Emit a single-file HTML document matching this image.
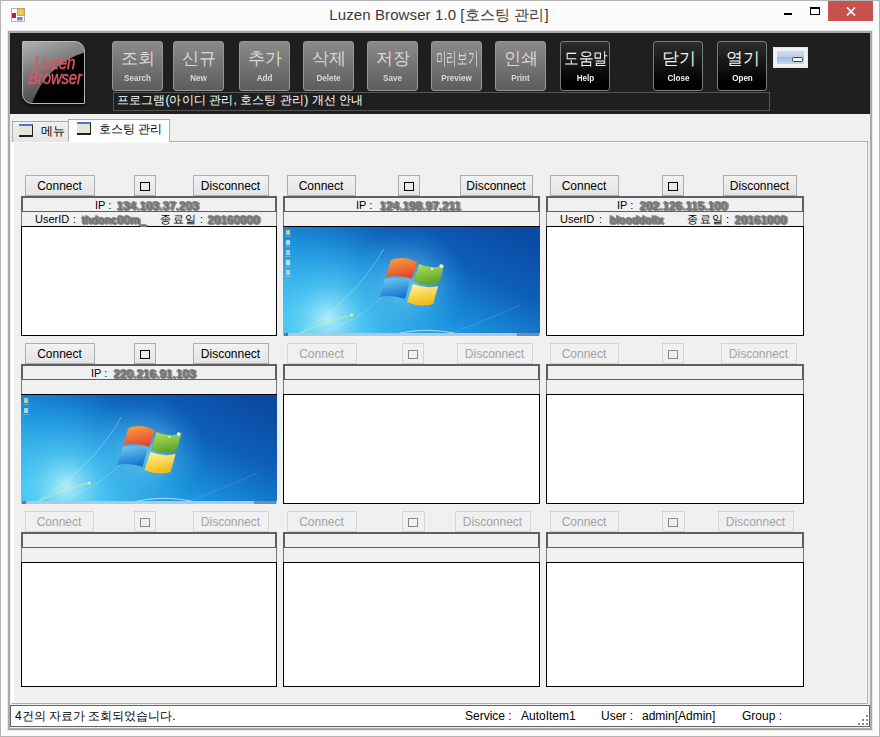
<!DOCTYPE html>
<html><head><meta charset="utf-8">
<style>
*{box-sizing:border-box;margin:0;padding:0}
html,body{width:880px;height:737px;overflow:hidden;background:#fbfbfb;font-family:"Liberation Sans", sans-serif}
.abs,div,span,svg{position:absolute}
#win{left:0;top:0;width:880px;height:737px;background:#fbfbfb}
#frame{left:0;top:0;width:880px;height:737px;border:1px solid #b4b4b4}
#title{left:-1px;top:6px;width:880px;text-align:center;font-size:15px;line-height:18px;color:#3a3a3a;letter-spacing:0.1px;padding-left:0px}
#client{left:7px;top:30px;width:866px;height:701px;border:1px solid #e6e6e6}
#client2{left:8px;top:31px;width:864px;height:699px;border:2px solid #a9a9a9;background:#f0f0f0}
#dark{left:10px;top:33px;width:860px;height:81px;background:#1f1f1f}
.tb{top:41px;width:51px;height:50px;border:1px solid #959595;border-radius:3px;background:linear-gradient(#8a8a8a,#5d5d5d);color:#d8d8d8;text-align:center}
.tb.dark{width:50px;border-color:#7c7c7c;background:linear-gradient(#2e2e2e,#000 85%)}
.tb .k{left:0;width:49px;top:6px;font-size:17px;line-height:21px;white-space:nowrap}
.tb .k.small{font-size:17px;letter-spacing:-1px}
.tb .k.sq4{transform:scaleX(0.62);left:-14px;width:78px}
.tb .k.sq3{transform:scaleX(0.86);left:-5px;width:60px}
.tb .e{left:0;width:49px;top:30px;font-size:9.4px;line-height:11px;font-weight:bold;transform:scaleX(0.86)}
.tb.dark .k,.tb.dark .e{color:#f2f2f2}
#tbox{left:113px;top:92px;width:657px;height:19px;border:1px solid #555;background:#1f1f1f;color:#fff;font-size:12px;line-height:15px;padding-left:3px;white-space:nowrap;letter-spacing:0.1px}
#logo{left:22px;top:41px;width:63px;height:63px;border:1px solid #b8b8b8;border-radius:1px 10px 1px 10px;overflow:hidden;background:linear-gradient(160deg,#b0b0b0,#606060 60%,#333);box-shadow:0 2px 3px rgba(0,0,0,.6)}
#logo .gl{left:5px;top:7px;width:160px;height:160px;border-radius:50%;background:#000}
#logo .lt{left:0;width:62px;font-style:italic;color:#dc5660;font-size:15px;line-height:16px;text-align:center;font-family:"Liberation Sans",sans-serif;-webkit-text-stroke:0.4px #dc5660;transform:scaleY(1.22)}
#smallbtn{left:773px;top:47px;width:35px;height:21px;border:1px solid #e4e8ec;background:#f0f3f6}
#smallbtn b{position:absolute;left:3px;top:3px;width:27px;height:13px;background:linear-gradient(#d2deee 0%,#bccfe8 45%,#a6bcd8 50%,#b4c8e4 75%,#c6d8f0 100%)}
#smallbtn i{position:absolute;left:18px;top:9px;width:11px;height:5px;border:1px solid #3a4250;background:#f4f4f4;border-radius:1.5px}
.tab{top:121px;height:21px;border:1px solid #acacac;border-bottom:none;background:linear-gradient(#f0f0f0,#e5e5e5);font-size:13px;color:#000}
.tab.act{top:119px;height:23px;background:#fff}
.ticon{width:14px;height:13px;background:#e6e6d8;border-top:2px solid #4a78c8;border-right:1px solid #222;border-bottom:2px solid #222}
#page{left:11px;top:141px;width:857px;height:563px;border:1px solid #acacac;border-left-color:#fff;background:#f0f0f0}
#page2{left:0;top:0;width:855px;height:561px;border:1px solid #fafafa;border-left:2px solid #fff}
.b{height:21px;border:1px solid #adadad;background:linear-gradient(#f2f2f2,#e4e4e4);font-size:12px;line-height:20px;text-indent:-1px;text-align:center;color:#000;white-space:nowrap}
.b.dis{border-color:#d5d5d5;background:#f0f0f0;color:#a3a3a3}
.sq{position:absolute;left:5px;top:6px;width:10px;height:9px;border:1px solid #000}
.dis .sq{border-color:#8a8a8a}
.ip{height:16px;border:2px solid #5f5f5f;border-bottom-width:1px;background:#f0f0f0}
.ip{box-sizing:content-box;height:13px;width:auto}
.uid{height:14px;border-left:1px solid #7a7a7a;border-right:1px solid #7a7a7a;background:#f0f0f0;box-sizing:content-box}
.img{border:1px solid #000;background:#fff;box-sizing:content-box}
.t{font-size:11px;line-height:13px;color:#000;white-space:nowrap}
.bl{height:9px;border-radius:4px;background:#767676;filter:blur(0.6px)}
.blt{height:14px;font-size:11px;line-height:14px;color:#707070;overflow:visible;white-space:nowrap;letter-spacing:0.4px;text-shadow:1px 0 #808080,-1px 0 #808080,0 1px #888,0 -1px #888,1px 1px #8a8a8a,-1px -1px #8a8a8a,2px 0 #909090;filter:blur(0.65px)}
#status{left:10px;top:705px;width:860px;height:22px;border:1px solid #646464;background:#fff;font-size:12px}
.st{top:3px;font-size:12px;line-height:14px;color:#000;white-space:nowrap}
.grip{width:2px;height:2px;background:#8c8c8c}
</style></head><body>
<div id="win">
<div id="frame"></div>
<svg style="left:11px;top:8px" width="14" height="14" viewBox="0 0 14 14">
<rect x="0.5" y="0.5" width="13" height="13" fill="#fff" stroke="#b4b4b4"/>
<rect x="6.5" y="0.8" width="6.7" height="6.7" fill="#f2ca55" stroke="#c49a2a" stroke-width="0.8"/>
<rect x="1" y="5" width="4" height="5" fill="#b8262c"/>
<rect x="6" y="9" width="5.5" height="3.5" fill="#5b8bd9"/>
</svg>
<div id="title">Luzen Browser 1.0 [호스팅 관리]</div>
<div style="left:784px;top:13px;width:8px;height:2px;background:#000"></div>
<div style="left:810px;top:7px;width:10px;height:8px;border:1px solid #000;border-top-width:2px"></div>
<div style="left:828px;top:1px;width:45px;height:20px;background:#c7514f"></div>
<svg style="left:846px;top:7px" width="10" height="9" viewBox="0 0 10 9"><path d="M1 0.5 L9 8.5 M9 0.5 L1 8.5" stroke="#fff" stroke-width="1.7"/></svg>
<div id="client"></div>
<div id="client2"></div>
<div id="dark"></div>
<div id="logo"><div class="gl"></div><div class="lt" style="top:13px;left:1px">Luzen</div><div class="lt" style="top:28px;letter-spacing:-0.2px;left:1px">Browser</div></div>
<div class="tb" style="left:112px"><div class="k">조회</div><div class="e">Search</div></div>
<div class="tb" style="left:173px"><div class="k">신규</div><div class="e">New</div></div>
<div class="tb" style="left:239px"><div class="k">추가</div><div class="e">Add</div></div>
<div class="tb" style="left:303px"><div class="k">삭제</div><div class="e">Delete</div></div>
<div class="tb" style="left:367px"><div class="k">저장</div><div class="e">Save</div></div>
<div class="tb" style="left:431px"><div class="k sq4">미리보기</div><div class="e">Preview</div></div>
<div class="tb" style="left:495px"><div class="k">인쇄</div><div class="e">Print</div></div>
<div class="tb dark" style="left:560px"><div class="k sq3">도움말</div><div class="e">Help</div></div>
<div class="tb dark" style="left:653px"><div class="k">닫기</div><div class="e">Close</div></div>
<div class="tb dark" style="left:717px"><div class="k">열기</div><div class="e">Open</div></div>
<div id="smallbtn"><b></b><i></i></div>
<div id="tbox">프로그램(아이디 관리, 호스팅 관리) 개선 안내</div>
<div id="page"><div id="page2"></div></div>
<div class="tab" style="left:12px;width:57px"><div class="ticon" style="left:6px;top:2px"></div><span style="left:28px;top:1px;font-size:12px">메뉴</span></div>
<div class="tab act" style="left:68px;width:102px"><div class="ticon" style="left:8px;top:2px"></div><span style="left:30px;top:1px;font-size:12px">호스팅 관리</span></div>
<div class="b" style="left:25px;top:175px;width:70px">Connect</div>
<div class="b" style="left:134px;top:175px;width:22px"><i class="sq"></i></div>
<div class="b" style="left:193px;top:175px;width:76px">Disconnect</div>
<div class="ip" style="left:21px;top:196px;width:252px"></div>
<div class="uid" style="left:21px;top:212px;width:254px"></div>
<div class="img" style="left:21px;top:226px;width:254px;height:108px"></div>
<div class="b" style="left:287px;top:175px;width:69px">Connect</div>
<div class="b" style="left:398px;top:175px;width:22px"><i class="sq"></i></div>
<div class="b" style="left:460px;top:175px;width:73px">Disconnect</div>
<div class="ip" style="left:283px;top:196px;width:253px"></div>
<div class="uid" style="left:283px;top:212px;width:255px"></div>
<div class="img" style="left:283px;top:226px;width:255px;height:108px"></div>
<div class="b" style="left:550px;top:175px;width:69px">Connect</div>
<div class="b" style="left:662px;top:175px;width:22px"><i class="sq"></i></div>
<div class="b" style="left:723px;top:175px;width:74px">Disconnect</div>
<div class="ip" style="left:546px;top:196px;width:254px"></div>
<div class="uid" style="left:546px;top:212px;width:256px"></div>
<div class="img" style="left:546px;top:226px;width:256px;height:108px"></div>
<div class="b" style="left:25px;top:343px;width:70px">Connect</div>
<div class="b" style="left:134px;top:343px;width:22px"><i class="sq"></i></div>
<div class="b" style="left:193px;top:343px;width:76px">Disconnect</div>
<div class="ip" style="left:21px;top:364px;width:252px"></div>
<div class="uid" style="left:21px;top:380px;width:254px"></div>
<div class="img" style="left:21px;top:394px;width:254px;height:108px"></div>
<div class="b dis" style="left:287px;top:343px;width:70px">Connect</div>
<div class="b dis" style="left:402px;top:343px;width:22px"><i class="sq"></i></div>
<div class="b dis" style="left:457px;top:343px;width:76px">Disconnect</div>
<div class="ip" style="left:283px;top:364px;width:253px"></div>
<div class="uid" style="left:283px;top:380px;width:255px"></div>
<div class="img" style="left:283px;top:394px;width:255px;height:108px"></div>
<div class="b dis" style="left:550px;top:343px;width:69px">Connect</div>
<div class="b dis" style="left:662px;top:343px;width:22px"><i class="sq"></i></div>
<div class="b dis" style="left:721px;top:343px;width:76px">Disconnect</div>
<div class="ip" style="left:546px;top:364px;width:254px"></div>
<div class="uid" style="left:546px;top:380px;width:256px"></div>
<div class="img" style="left:546px;top:394px;width:256px;height:108px"></div>
<div class="b dis" style="left:25px;top:511px;width:69px">Connect</div>
<div class="b dis" style="left:134px;top:511px;width:22px"><i class="sq"></i></div>
<div class="b dis" style="left:193px;top:511px;width:76px">Disconnect</div>
<div class="ip" style="left:21px;top:532px;width:252px"></div>
<div class="uid" style="left:21px;top:548px;width:254px"></div>
<div class="img" style="left:21px;top:562px;width:254px;height:123px"></div>
<div class="b dis" style="left:287px;top:511px;width:70px">Connect</div>
<div class="b dis" style="left:402px;top:511px;width:23px"><i class="sq"></i></div>
<div class="b dis" style="left:455px;top:511px;width:76px">Disconnect</div>
<div class="ip" style="left:283px;top:532px;width:253px"></div>
<div class="uid" style="left:283px;top:548px;width:255px"></div>
<div class="img" style="left:283px;top:562px;width:255px;height:123px"></div>
<div class="b dis" style="left:550px;top:511px;width:69px">Connect</div>
<div class="b dis" style="left:662px;top:511px;width:23px"><i class="sq"></i></div>
<div class="b dis" style="left:718px;top:511px;width:76px">Disconnect</div>
<div class="ip" style="left:546px;top:532px;width:254px"></div>
<div class="uid" style="left:546px;top:548px;width:256px"></div>
<div class="img" style="left:546px;top:562px;width:256px;height:123px"></div>
<span class="t" style="left:95px;top:199px;">IP :</span><span class="blt" style="left:117px;top:199px;width:90px">134.103.37.203</span>
<span class="t" style="left:35px;top:213px;">UserID</span><span class="t" style="left:73px;top:213px;">:</span><span class="blt" style="left:82px;top:213px;width:68px">thdonc00m_</span><span class="t" style="left:160px;top:213px;letter-spacing:1.5px">종료일</span><span class="t" style="left:200px;top:213px;">:</span><span class="blt" style="left:208px;top:213px;width:57px">20160000</span>
<span class="t" style="left:356px;top:199px;">IP :</span><span class="blt" style="left:380px;top:199px;width:92px">124.198.97.211</span>
<svg class="w7" style="left:283px;top:227px" width="257" height="109" viewBox="0 0 255 109" preserveAspectRatio="none">
<defs>
<linearGradient id="lg283" x1="1" y1="0.15" x2="0.1" y2="0.95">
<stop offset="0" stop-color="#0b4aa4"/>
<stop offset="0.3" stop-color="#0e5fb9"/>
<stop offset="0.62" stop-color="#1a92dc"/>
<stop offset="1" stop-color="#44c4f2"/>
</linearGradient>
<radialGradient id="g1283" cx="45" cy="92" r="95" gradientUnits="userSpaceOnUse">
<stop offset="0" stop-color="#b8f0fb" stop-opacity="0.95"/>
<stop offset="0.35" stop-color="#5fd2f6" stop-opacity="0.6"/>
<stop offset="1" stop-color="#2aa8ea" stop-opacity="0"/>
</radialGradient>
<radialGradient id="g2283" cx="125" cy="58" r="58" gradientUnits="userSpaceOnUse">
<stop offset="0" stop-color="#a8e8fb" stop-opacity="0.6"/>
<stop offset="1" stop-color="#2aa8ea" stop-opacity="0"/>
</radialGradient>
<linearGradient id="or283" x1="0" y1="0" x2="0.3" y2="1"><stop offset="0" stop-color="#f9a548"/><stop offset="1" stop-color="#e5492a"/></linearGradient>
<linearGradient id="gr283" x1="0" y1="0" x2="0.3" y2="1"><stop offset="0" stop-color="#b5e35a"/><stop offset="1" stop-color="#5ea42f"/></linearGradient>
<linearGradient id="bl283" x1="0" y1="0" x2="0.3" y2="1"><stop offset="0" stop-color="#74cdf5"/><stop offset="1" stop-color="#1676cf"/></linearGradient>
<linearGradient id="ye283" x1="0" y1="0" x2="0.3" y2="1"><stop offset="0" stop-color="#fff7a0"/><stop offset="1" stop-color="#f2bc18"/></linearGradient>
</defs>
<rect width="255" height="109" fill="url(#lg283)"/>
<rect width="255" height="109" fill="url(#g1283)"/>
<rect width="255" height="109" fill="url(#g2283)"/>
<path d="M12 109 Q70 75 100 22" stroke="#c8f6ff" stroke-width="0.7" fill="none" opacity="0.55"/>
<path d="M30 109 Q85 90 105 62" stroke="#c8f6ff" stroke-width="0.6" fill="none" opacity="0.45"/>
<path d="M18 106 Q40 95 68 88" stroke="#c6f28a" stroke-width="0.9" fill="none" opacity="0.8"/>
<circle cx="68" cy="88" r="1.6" fill="#d8f8a0"/>
<path d="M112 107 Q140 100 170 106" stroke="#e0faff" stroke-width="1" fill="none" opacity="0.7"/>
<path d="M170 105 Q210 90 235 78" stroke="#9fdcfa" stroke-width="0.5" fill="none" opacity="0.4"/>
<path d="M107 33 Q119 28 133 35 L128 52 Q115 47 102 50 Z" fill="url(#or283)"/>
<path d="M135 37 Q147 43 160 38 L155 56 Q143 61 130 54 Z" fill="url(#gr283)"/>
<path d="M101 52 Q114 49 126 55 L121 72 Q108 67 96 70 Z" fill="url(#bl283)"/>
<path d="M129 57 Q142 62 154 59 L149 77 Q136 81 123 75 Z" fill="url(#ye283)"/>
<circle cx="157" cy="39" r="1.8" fill="#f4ffe0"/>
<circle cx="148" cy="42" r="1.2" fill="#f4ffe0" opacity="0.8"/>
<rect x="3" y="3" width="4" height="5" fill="#e8e0a0" opacity="0.75"/><rect x="2" y="9" width="6" height="1" fill="#cfe6f8" opacity="0.35"/><rect x="3" y="13" width="4" height="5" fill="#d8e8f8" opacity="0.75"/><rect x="2" y="19" width="6" height="1" fill="#cfe6f8" opacity="0.35"/><rect x="3" y="23" width="4" height="5" fill="#c0dcf4" opacity="0.75"/><rect x="2" y="29" width="6" height="1" fill="#cfe6f8" opacity="0.35"/><rect x="3" y="33" width="4" height="5" fill="#f0f4f8" opacity="0.75"/><rect x="2" y="39" width="6" height="1" fill="#cfe6f8" opacity="0.35"/><rect x="3" y="43" width="4" height="5" fill="#d8dce4" opacity="0.75"/><rect x="2" y="49" width="6" height="1" fill="#cfe6f8" opacity="0.35"/>
<rect x="0" y="106" width="255" height="3" fill="#a9c9e4"/>
<rect x="1" y="106" width="4" height="3" fill="#5a7a98"/>
<rect x="232" y="106" width="22" height="3" fill="#6f8fae"/>
</svg>
<span class="t" style="left:617px;top:199px;">IP :</span><span class="blt" style="left:640px;top:199px;width:95px">202.126.115.100</span>
<span class="t" style="left:560px;top:213px;">UserID</span><span class="t" style="left:599px;top:213px;">:</span><span class="blt" style="left:610px;top:213px;width:50px">blooddollx</span><span class="t" style="left:687px;top:213px;letter-spacing:1.5px">종료일</span><span class="t" style="left:726px;top:213px;">:</span><span class="blt" style="left:735px;top:213px;width:62px">20161000</span>
<span class="t" style="left:91px;top:367px;">IP :</span><span class="blt" style="left:114px;top:367px;width:93px">220.216.91.103</span>
<svg class="w7" style="left:21px;top:395px" width="256" height="109" viewBox="0 0 255 109" preserveAspectRatio="none">
<defs>
<linearGradient id="lg21" x1="1" y1="0.15" x2="0.1" y2="0.95">
<stop offset="0" stop-color="#0b4aa4"/>
<stop offset="0.3" stop-color="#0e5fb9"/>
<stop offset="0.62" stop-color="#1a92dc"/>
<stop offset="1" stop-color="#44c4f2"/>
</linearGradient>
<radialGradient id="g121" cx="45" cy="92" r="95" gradientUnits="userSpaceOnUse">
<stop offset="0" stop-color="#b8f0fb" stop-opacity="0.95"/>
<stop offset="0.35" stop-color="#5fd2f6" stop-opacity="0.6"/>
<stop offset="1" stop-color="#2aa8ea" stop-opacity="0"/>
</radialGradient>
<radialGradient id="g221" cx="125" cy="58" r="58" gradientUnits="userSpaceOnUse">
<stop offset="0" stop-color="#a8e8fb" stop-opacity="0.6"/>
<stop offset="1" stop-color="#2aa8ea" stop-opacity="0"/>
</radialGradient>
<linearGradient id="or21" x1="0" y1="0" x2="0.3" y2="1"><stop offset="0" stop-color="#f9a548"/><stop offset="1" stop-color="#e5492a"/></linearGradient>
<linearGradient id="gr21" x1="0" y1="0" x2="0.3" y2="1"><stop offset="0" stop-color="#b5e35a"/><stop offset="1" stop-color="#5ea42f"/></linearGradient>
<linearGradient id="bl21" x1="0" y1="0" x2="0.3" y2="1"><stop offset="0" stop-color="#74cdf5"/><stop offset="1" stop-color="#1676cf"/></linearGradient>
<linearGradient id="ye21" x1="0" y1="0" x2="0.3" y2="1"><stop offset="0" stop-color="#fff7a0"/><stop offset="1" stop-color="#f2bc18"/></linearGradient>
</defs>
<rect width="255" height="109" fill="url(#lg21)"/>
<rect width="255" height="109" fill="url(#g121)"/>
<rect width="255" height="109" fill="url(#g221)"/>
<path d="M12 109 Q70 75 100 22" stroke="#c8f6ff" stroke-width="0.7" fill="none" opacity="0.55"/>
<path d="M30 109 Q85 90 105 62" stroke="#c8f6ff" stroke-width="0.6" fill="none" opacity="0.45"/>
<path d="M18 106 Q40 95 68 88" stroke="#c6f28a" stroke-width="0.9" fill="none" opacity="0.8"/>
<circle cx="68" cy="88" r="1.6" fill="#d8f8a0"/>
<path d="M112 107 Q140 100 170 106" stroke="#e0faff" stroke-width="1" fill="none" opacity="0.7"/>
<path d="M170 105 Q210 90 235 78" stroke="#9fdcfa" stroke-width="0.5" fill="none" opacity="0.4"/>
<path d="M107 33 Q119 28 133 35 L128 52 Q115 47 102 50 Z" fill="url(#or21)"/>
<path d="M135 37 Q147 43 160 38 L155 56 Q143 61 130 54 Z" fill="url(#gr21)"/>
<path d="M101 52 Q114 49 126 55 L121 72 Q108 67 96 70 Z" fill="url(#bl21)"/>
<path d="M129 57 Q142 62 154 59 L149 77 Q136 81 123 75 Z" fill="url(#ye21)"/>
<circle cx="157" cy="39" r="1.8" fill="#f4ffe0"/>
<circle cx="148" cy="42" r="1.2" fill="#f4ffe0" opacity="0.8"/>
<rect x="3" y="3" width="4" height="5" fill="#e8e0a0" opacity="0.75"/><rect x="2" y="9" width="6" height="1" fill="#cfe6f8" opacity="0.35"/><rect x="3" y="13" width="4" height="5" fill="#d8e8f8" opacity="0.75"/><rect x="2" y="19" width="6" height="1" fill="#cfe6f8" opacity="0.35"/>
<rect x="0" y="106" width="255" height="3" fill="#a9c9e4"/>
<rect x="1" y="106" width="4" height="3" fill="#5a7a98"/>
<rect x="232" y="106" width="22" height="3" fill="#6f8fae"/>
</svg>
<div id="status">
<span class="st" style="left:4px">4건의 자료가 조회되었습니다.</span>
<span class="st" style="left:454px">Service :</span>
<span class="st" style="left:510px">AutoItem1</span>
<span class="st" style="left:590px">User :</span>
<span class="st" style="left:631px">admin[Admin]</span>
<span class="st" style="left:731px">Group :</span>
<div class="grip" style="left:855px;top:9px"></div><div class="grip" style="left:851px;top:13px"></div><div class="grip" style="left:855px;top:13px"></div><div class="grip" style="left:847px;top:17px"></div><div class="grip" style="left:851px;top:17px"></div><div class="grip" style="left:855px;top:17px"></div>
</div>
</div>
</body></html>
